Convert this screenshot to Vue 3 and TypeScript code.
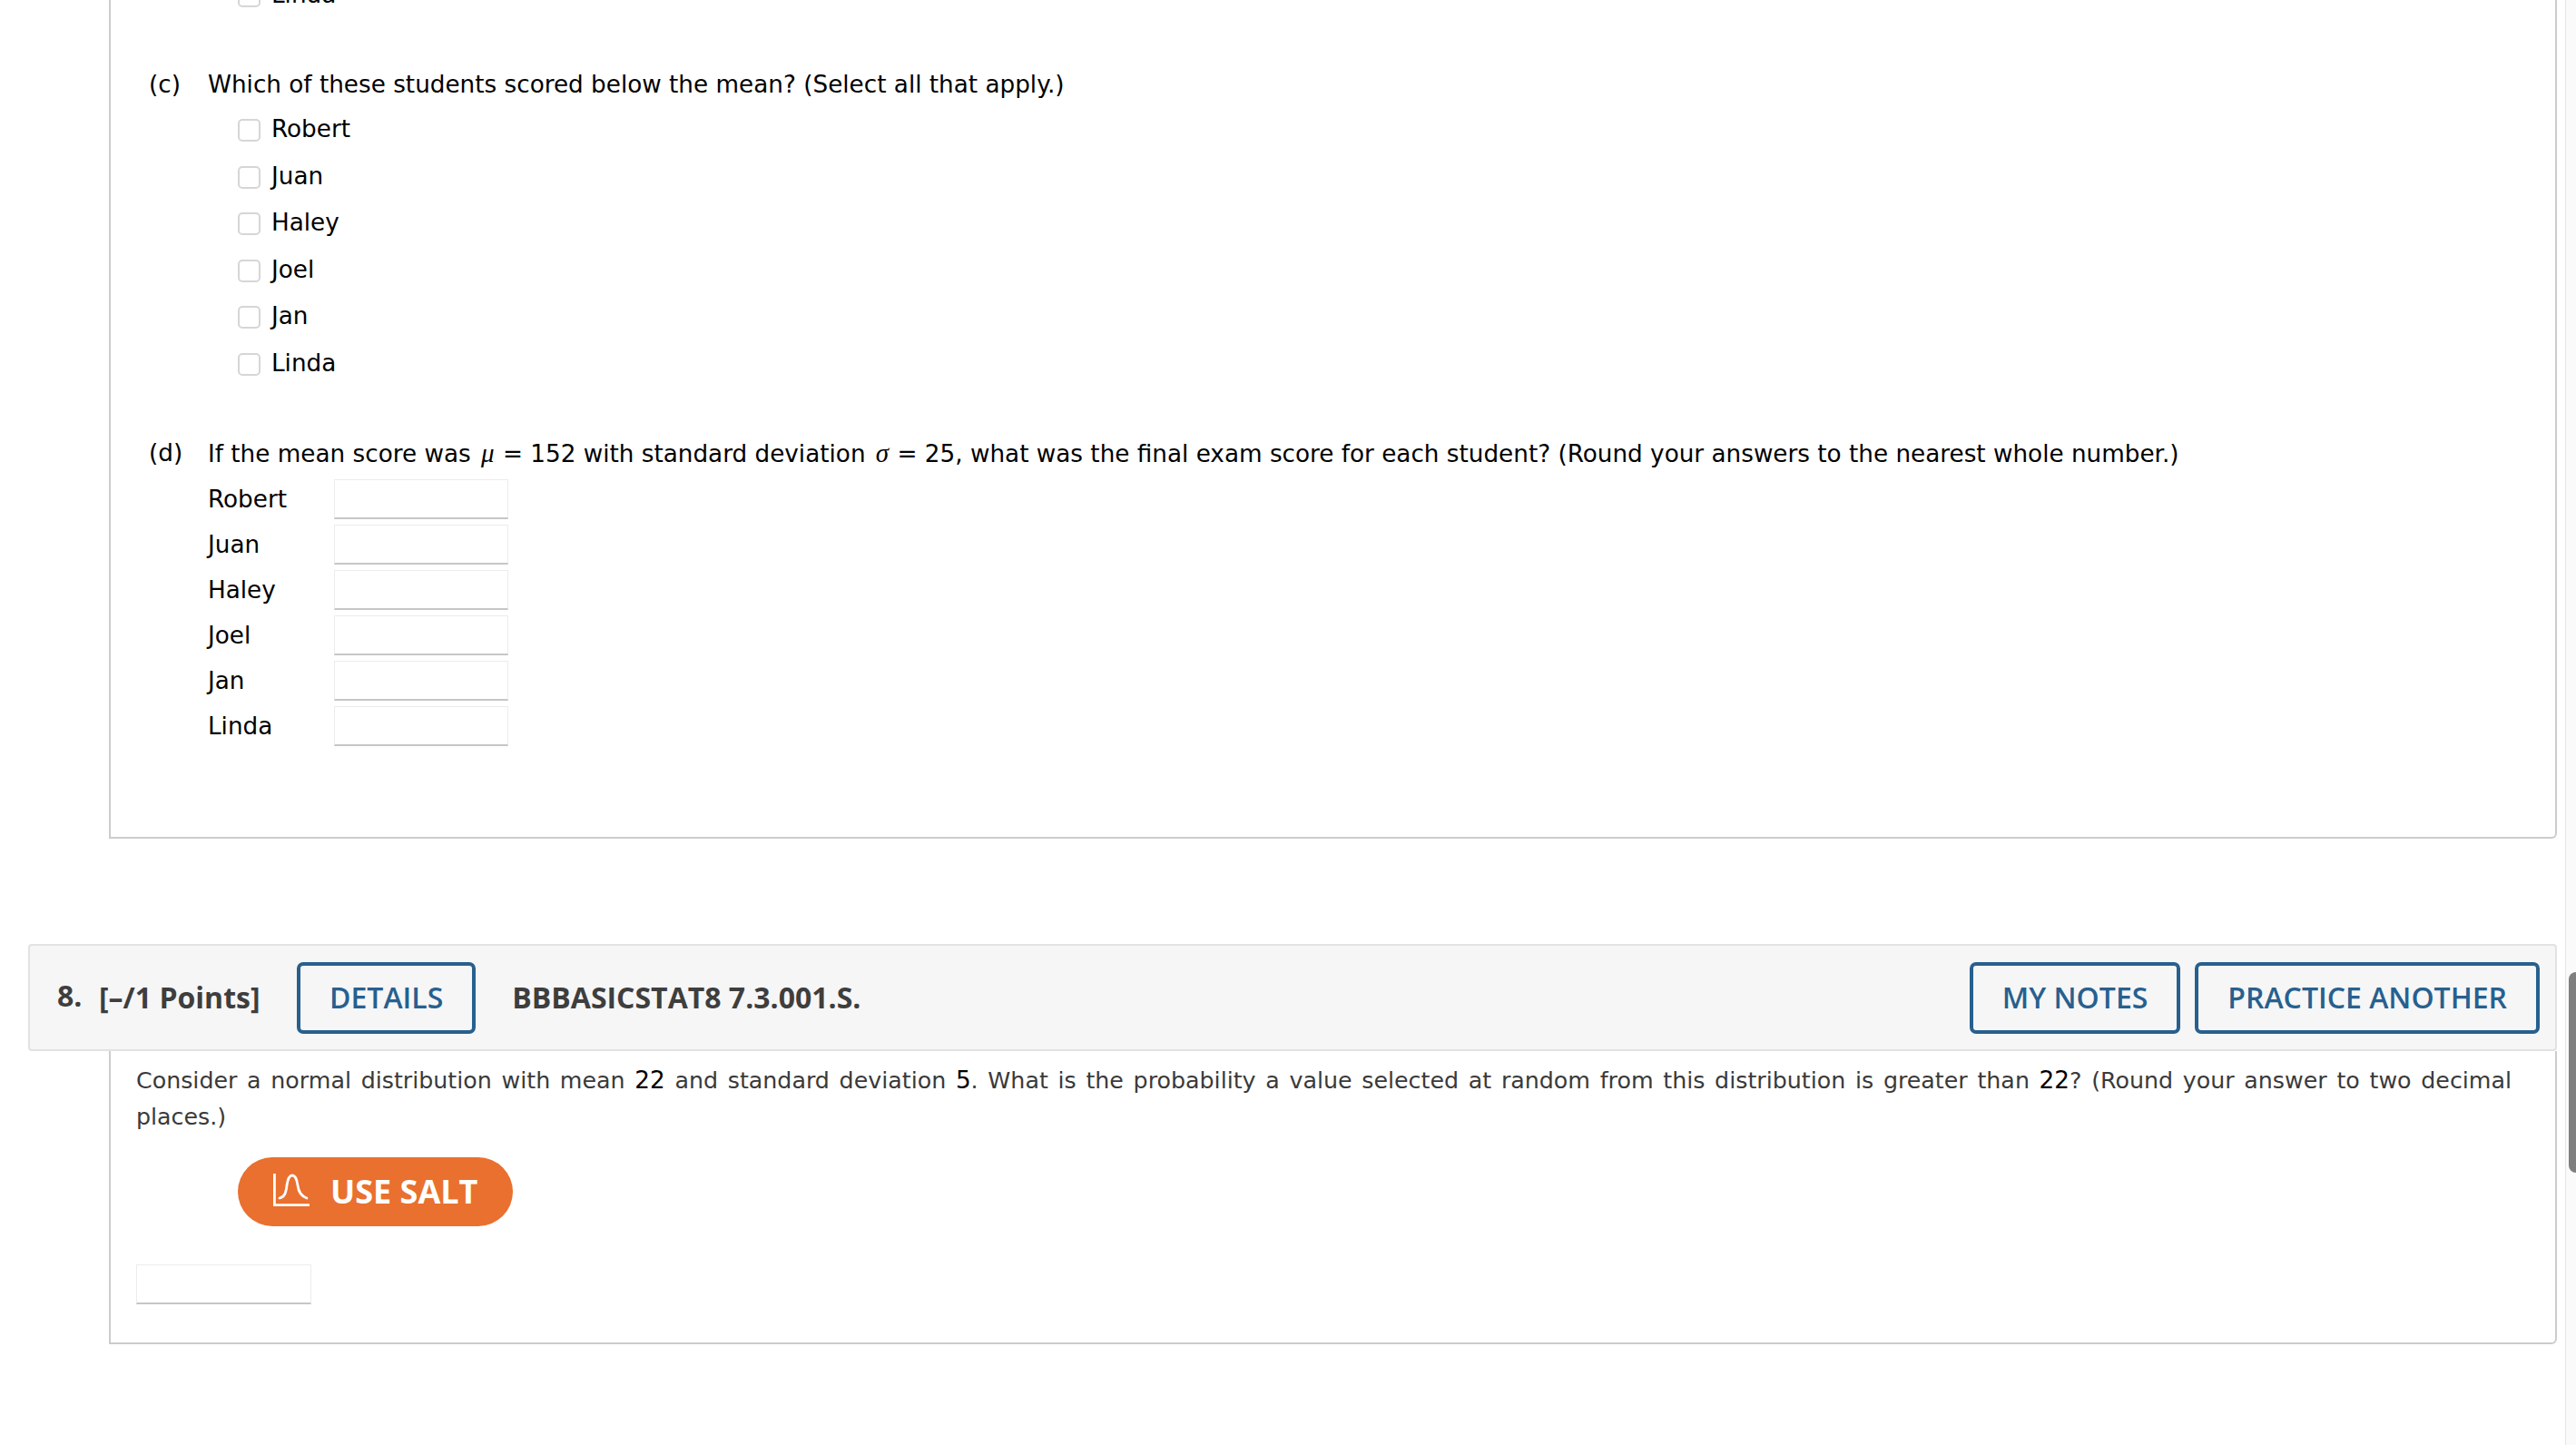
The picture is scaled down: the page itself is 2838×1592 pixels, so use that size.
<template>
  <div class="page">
    <div class="scroll-track"><div class="scroll-thumb"></div></div>

    <section class="panel panel-top">
      <div class="choice cut-off">
        <span class="box"></span><span>Linda</span>
      </div>

      <div class="part part-c">
        <div class="part-line">
          <span class="part-label">(c)</span>
          <span>Which of these students scored below the mean? (Select all that apply.)</span>
        </div>
        <div class="choices">
          <label v-for="s in students" :key="s" class="choice">
            <span class="box"></span><span>{{ s }}</span>
          </label>
        </div>
      </div>

      <div class="part part-d">
        <div class="part-line">
          <span class="part-label">(d)</span>
          <span>If the mean score was <i class="greek">μ</i> = 152 with standard deviation <i class="greek">σ</i> = 25, what was the final exam score for each student? (Round your answers to the nearest whole number.)</span>
        </div>
        <div class="score-grid">
          <template v-for="s in students" :key="s">
            <span>{{ s }}</span>
            <div class="answer"></div>
          </template>
        </div>
      </div>
    </section>

    <header class="q-head">
      <span class="q-num">8.</span>
      <span class="q-points">[–/1 Points]</span>
      <a class="btn btn-details">DETAILS</a>
      <span class="q-code">BBBASICSTAT8 7.3.001.S.</span>
      <a class="btn btn-notes">MY NOTES</a>
      <a class="btn">PRACTICE ANOTHER</a>
    </header>

    <section class="panel panel-q">
      <p class="q-text">Consider a normal distribution with mean <b>22</b> and standard deviation <b>5</b>. What is the probability a value selected at random from this distribution is greater than <b>22</b>? (Round your answer to two decimal places.)</p>
      <a class="salt">
        <svg class="salt-icon" viewBox="0 0 40 36" fill="none" stroke="#fff" stroke-width="2.8">
          <path d="M1.4 0v34.6H40" />
          <path d="M7 27c5-1 7-5 8-14 1-7 3-11 6-11s5 4 6 11c1 8 4 12 10 14" stroke-linecap="round" />
        </svg>
        <span>USE SALT</span>
      </a>
      <div class="answer"></div>
    </section>
  </div>
</template>

<script setup lang="ts">
const students: string[] = ['Robert', 'Juan', 'Haley', 'Joel', 'Jan', 'Linda']
</script>

<style>
html, body { margin: 0; background: #fff; }
</style>

<style scoped>
.page {
  position: relative;
  height: 1592px;
  overflow: hidden;
  background: #fff;
  color: #000;
  font-family: "DejaVu Sans", Verdana, sans-serif;
  font-size: 26.25px;
  line-height: 40px;
}
.scroll-track {
  position: absolute;
  top: 0;
  right: 0;
  bottom: 0;
  width: 11px;
  background: #fafafa;
  border-left: 1px solid #e6e6e6;
}
.scroll-thumb {
  position: absolute;
  top: 1071px;
  left: 3px;
  right: 0;
  height: 221px;
  background: #7f7f7f;
  border-radius: 8px 0 0 8px;
}
.panel {
  margin: 0 21px 0 120px;
  border: 2px solid #cccccc;
  border-top: 0;
  border-radius: 0 0 6px 0;
}
.panel-top {
  height: 950px;
  padding: 0 0 0 42px;
  box-sizing: border-box;
}
.part-c { margin-top: 59px; }
.part-d { margin-top: 59px; }
.part-line { display: flex; }
.part-label { width: 65px; flex: none; }
.greek { font-family: "Liberation Serif", serif; font-size: 29px; margin: 0 1px 0 3px; }
.choices {
  display: flex;
  flex-direction: column;
  gap: 11.5px;
  margin: 9px 0 0 98px;
}
.choice {
  display: flex;
  align-items: center;
  gap: 12px;
  height: 40px;
}
.cut-off {
  margin: -26px 0 0 98px;
}
.box {
  width: 25px;
  height: 25px;
  box-sizing: border-box;
  border: 2px solid #d6d6d6;
  border-radius: 5px;
  background: #fff;
  margin-top: 3px;
}
.score-grid {
  display: grid;
  grid-template-columns: 139px 192px;
  grid-auto-rows: 44px;
  row-gap: 6px;
  align-items: center;
  margin: 8px 0 0 65px;
}
.answer {
  width: 193px;
  height: 44px;
  box-sizing: border-box;
  border: 1px solid #ececec;
  border-bottom: 2px solid #c6c6c6;
  background: #fff;
}
.score-grid .answer { width: 192px; }
.q-head {
  display: flex;
  align-items: center;
  height: 118px;
  box-sizing: border-box;
  margin: 116px 21px 0 31px;
  padding: 0 17px 0 30px;
  background: #f6f6f6;
  border: 2px solid #e2e2e2;
  border-radius: 4px;
  color: #3e3e3e;
  font-family: "Open Sans", sans-serif;
  font-weight: 700;
  font-size: 32px;
}
.q-num { width: 46px; margin-top: -4px; }
.q-points { width: 218px; }
.q-code { margin-left: 40px; margin-right: auto; }
.btn {
  display: flex;
  align-items: center;
  height: 79px;
  box-sizing: border-box;
  padding: 0 32px;
  border: 4px solid #27608f;
  border-radius: 7px;
  color: #27608f;
  font-weight: 600;
}
.btn-notes { margin-right: 16px; }
.panel-q {
  height: 323px;
  box-sizing: border-box;
  padding: 12px 48px 0 28px;
  color: #3a3a3a;
}
.q-text { margin: 0; text-align: justify; font-size: 25.3px; }
.q-text b { font-weight: 400; color: #000; font-size: 26.25px; }
.salt {
  display: flex;
  align-items: center;
  gap: 23px;
  width: 303px;
  height: 76px;
  box-sizing: border-box;
  margin: 24px 0 42px 112px;
  padding-left: 39px;
  border-radius: 38px;
  background: #e9702e;
  color: #fff;
  font-family: "Open Sans", sans-serif;
  font-weight: 700;
  font-size: 36px;
}
.salt-icon { width: 40px; height: 36px; margin-top: -4px; }
</style>
